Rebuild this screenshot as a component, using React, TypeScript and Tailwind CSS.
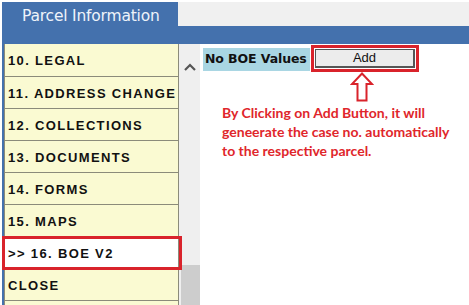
import React from 'react';

const items = [
  '10. LEGAL',
  '11. ADDRESS CHANGE',
  '12. COLLECTIONS',
  '13. DOCUMENTS',
  '14. FORMS',
  '15. MAPS',
  '>> 16. BOE V2',
  'CLOSE',
  '',
];

export default function App() {
  return (
    <div className="w-[469px] h-[305px] overflow-hidden bg-white pl-[2px] pt-[2px]">
      {/* Header tab */}
      <div className="flex h-[24px]">
        <div className="w-[176px] bg-[#4471ad] pl-[20px] pt-[5px] text-[15.5px] leading-[18px] text-[#eef3fa] font-['DejaVu_Sans',sans-serif] tracking-[-0.2px]">
          Parcel Information
        </div>
        <div className="flex-1 bg-[#f0f0f0]" />
      </div>
      <div className="h-[18px] bg-[#4471ad]" />

      <div className="flex">
        {/* Sidebar */}
        <div className="w-[177px] border-l-2 border-[#4471ad]">
          <div className="border-l border-r border-[#8b8b7a] bg-[#fafad2]">
            {items.map((label, i) => {
              const selected = label.startsWith('>>');
              return (
                <div
                  key={i}
                  className={`relative flex items-center pl-[3px] pt-[2px] border-b border-[#8b8b7a] ${
                    i === 0 ? 'h-[33px]' : 'h-[32px]'
                  } ${selected ? 'bg-white' : ''}`}
                >
                  <span className="text-[13px] font-bold tracking-[1.35px] text-[#111] font-['Liberation_Sans',Arial,sans-serif]">
                    {label}
                  </span>
                  {selected && (
                    <div className="absolute -left-[3px] -right-[4px] -top-[1px] bottom-[-2px] border-[3px] border-[#d9232b]" />
                  )}
                </div>
              );
            })}
          </div>
        </div>

        {/* Scroll column */}
        <div className="w-[21px] flex flex-col bg-[#efefef]">
          <div className="h-[221px] flex justify-center pt-[19px]">
            <svg width="12" height="8" viewBox="0 0 12 8">
              <path d="M1 7 L6 2 L11 7" fill="none" stroke="#555" strokeWidth="2.2" />
            </svg>
          </div>
          <div className="flex-1 ml-[2px] bg-[#cdcdcd]" />
        </div>

        {/* Main */}
        <div className="flex-1 pl-[3px] pt-[2px]">
          <div className="flex items-center">
            <div className="h-[23px] w-[107px] bg-[#a9d6e3] flex items-center pl-[2px] text-[12.5px] font-bold text-[#111] font-['DejaVu_Sans',Verdana,sans-serif] tracking-[-0.1px]">
              No BOE Values
            </div>
            <div className="ml-[1px] -mt-[1px] border-[3px] border-[#d9232b] p-[1px] w-[108px] h-[27px]">
              <div className="h-full border border-[#555] border-r-2 border-b-2 bg-[#ececec] flex items-center justify-center text-[13px] text-[#111] font-['Liberation_Sans',Arial,sans-serif]">
                Add
              </div>
            </div>
          </div>
          <div className="flex">
            <div className="w-[147px]" />
            <svg width="24" height="30" viewBox="0 0 24 30">
              <path
                d="M12 1.5 L22 12 L16.5 12 L16.5 28.5 L7.5 28.5 L7.5 12 L2 12 Z"
                fill="white"
                stroke="#d9232b"
                strokeWidth="2"
                strokeLinejoin="miter"
              />
            </svg>
          </div>
          <div className="pl-[19px] pt-[1px] text-[14px] leading-[19px] font-bold text-[#e0262b] font-['Lato',sans-serif]">
            <div>By Clicking on Add Button, it will</div>
            <div>geneerate the case no. automatically</div>
            <div>to the respective parcel.</div>
          </div>
        </div>
      </div>
    </div>
  );
}
